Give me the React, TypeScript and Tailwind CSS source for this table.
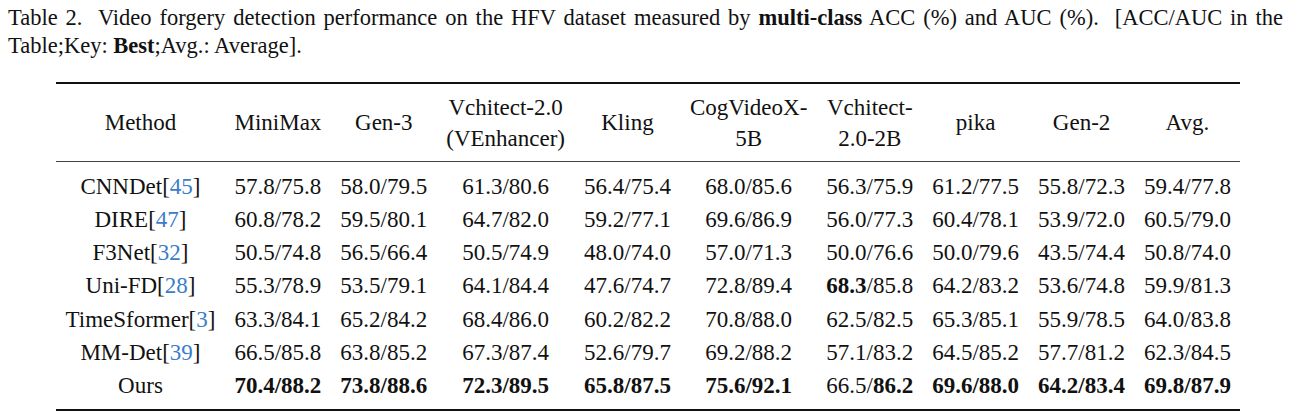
import type { ReactNode } from "react";

type Cell = { acc: string; auc: string; boldAcc?: boolean; boldAuc?: boolean };

type Row = { method: string; cite?: string; cells: Cell[] };

const headers: ReactNode[] = [
	"MiniMax",
	"Gen-3",
	<>
		Vchitect-2.0
		<br />
		(VEnhancer)
	</>,
	"Kling",
	<>
		CogVideoX-
		<br />
		5B
	</>,
	<>
		Vchitect-
		<br />
		2.0-2B
	</>,
	"pika",
	"Gen-2",
	"Avg.",
];

const parse = (line: string): Cell[] =>
	line.split(" ").map((value) => {
		const [acc, auc] = value.split("/");
		return {
			acc: acc.replace(/\*/g, ""),
			auc: auc.replace(/\*/g, ""),
			boldAcc: acc.includes("*"),
			boldAuc: auc.includes("*"),
		};
	});

const rows: Row[] = [
	{
		method: "CNNDet",
		cite: "45",
		cells: parse("57.8/75.8 58.0/79.5 61.3/80.6 56.4/75.4 68.0/85.6 56.3/75.9 61.2/77.5 55.8/72.3 59.4/77.8"),
	},
	{
		method: "DIRE",
		cite: "47",
		cells: parse("60.8/78.2 59.5/80.1 64.7/82.0 59.2/77.1 69.6/86.9 56.0/77.3 60.4/78.1 53.9/72.0 60.5/79.0"),
	},
	{
		method: "F3Net",
		cite: "32",
		cells: parse("50.5/74.8 56.5/66.4 50.5/74.9 48.0/74.0 57.0/71.3 50.0/76.6 50.0/79.6 43.5/74.4 50.8/74.0"),
	},
	{
		method: "Uni-FD",
		cite: "28",
		cells: parse("55.3/78.9 53.5/79.1 64.1/84.4 47.6/74.7 72.8/89.4 *68.3/85.8 64.2/83.2 53.6/74.8 59.9/81.3"),
	},
	{
		method: "TimeSformer",
		cite: "3",
		cells: parse("63.3/84.1 65.2/84.2 68.4/86.0 60.2/82.2 70.8/88.0 62.5/82.5 65.3/85.1 55.9/78.5 64.0/83.8"),
	},
	{
		method: "MM-Det",
		cite: "39",
		cells: parse("66.5/85.8 63.8/85.2 67.3/87.4 52.6/79.7 69.2/88.2 57.1/83.2 64.5/85.2 57.7/81.2 62.3/84.5"),
	},
	{
		method: "Ours",
		cells: parse("*70.4/*88.2 *73.8/*88.6 *72.3/*89.5 *65.8/*87.5 *75.6/*92.1 66.5/*86.2 *69.6/*88.0 *64.2/*83.4 *69.8/*87.9"),
	},
];

function Value({ cell }: { cell: Cell }) {
	if (cell.boldAcc && cell.boldAuc) {
		return <span className="font-bold">{`${cell.acc}/${cell.auc}`}</span>;
	}
	return (
		<>
			<span className={cell.boldAcc ? "font-bold" : ""}>{cell.acc}</span>/
			<span className={cell.boldAuc ? "font-bold" : ""}>{cell.auc}</span>
		</>
	);
}

export default function App() {
	return (
		<div className="h-[418px] w-[1301px] overflow-hidden bg-white font-['Liberation_Serif',serif] text-[#111]">
			<div className="pl-[8px] pt-[4px] text-[22.5px] leading-[28px]">
				<p className="w-[1275px] whitespace-nowrap [text-align-last:justify]">
					Table 2.&nbsp; Video forgery detection performance on the HFV dataset measured by{" "}
					<span className="font-bold">multi-class</span> ACC (%) and AUC (%).&nbsp; [ACC/AUC in the
				</p>
				<p>
					Table;Key: <span className="font-bold">Best</span>;Avg.: Average].
				</p>
			</div>

			<div className="ml-[56px] mt-[22px] w-fit border-y-2 border-[#111] text-[23px]">
				<table className="border-collapse text-center">
					<thead>
						<tr className="border-b border-[#444]">
							<th className="whitespace-nowrap px-[9.5px] py-[7.5px] font-normal leading-[31px]">
								Method
							</th>
							{headers.map((header, index) => (
								<th
									key={index}
									className="whitespace-nowrap px-[9.5px] py-[7.5px] font-normal leading-[31px]"
								>
									{header}
								</th>
							))}
						</tr>
					</thead>
					<tbody>
						<tr className="h-[8px]" />
						{rows.map((row) => (
							<tr key={row.method} className="leading-[33.3px]">
								<td className="whitespace-nowrap px-[9.5px]">
									{row.method}
									{row.cite && (
										<>
											[<span className="text-[#3a7dc9]">{row.cite}</span>]
										</>
									)}
								</td>
								{row.cells.map((cell, index) => (
									<td key={index} className="whitespace-nowrap px-[9.5px]">
										<Value cell={cell} />
									</td>
								))}
							</tr>
						))}
						<tr className="h-[6px]" />
					</tbody>
				</table>
			</div>
		</div>
	);
}
